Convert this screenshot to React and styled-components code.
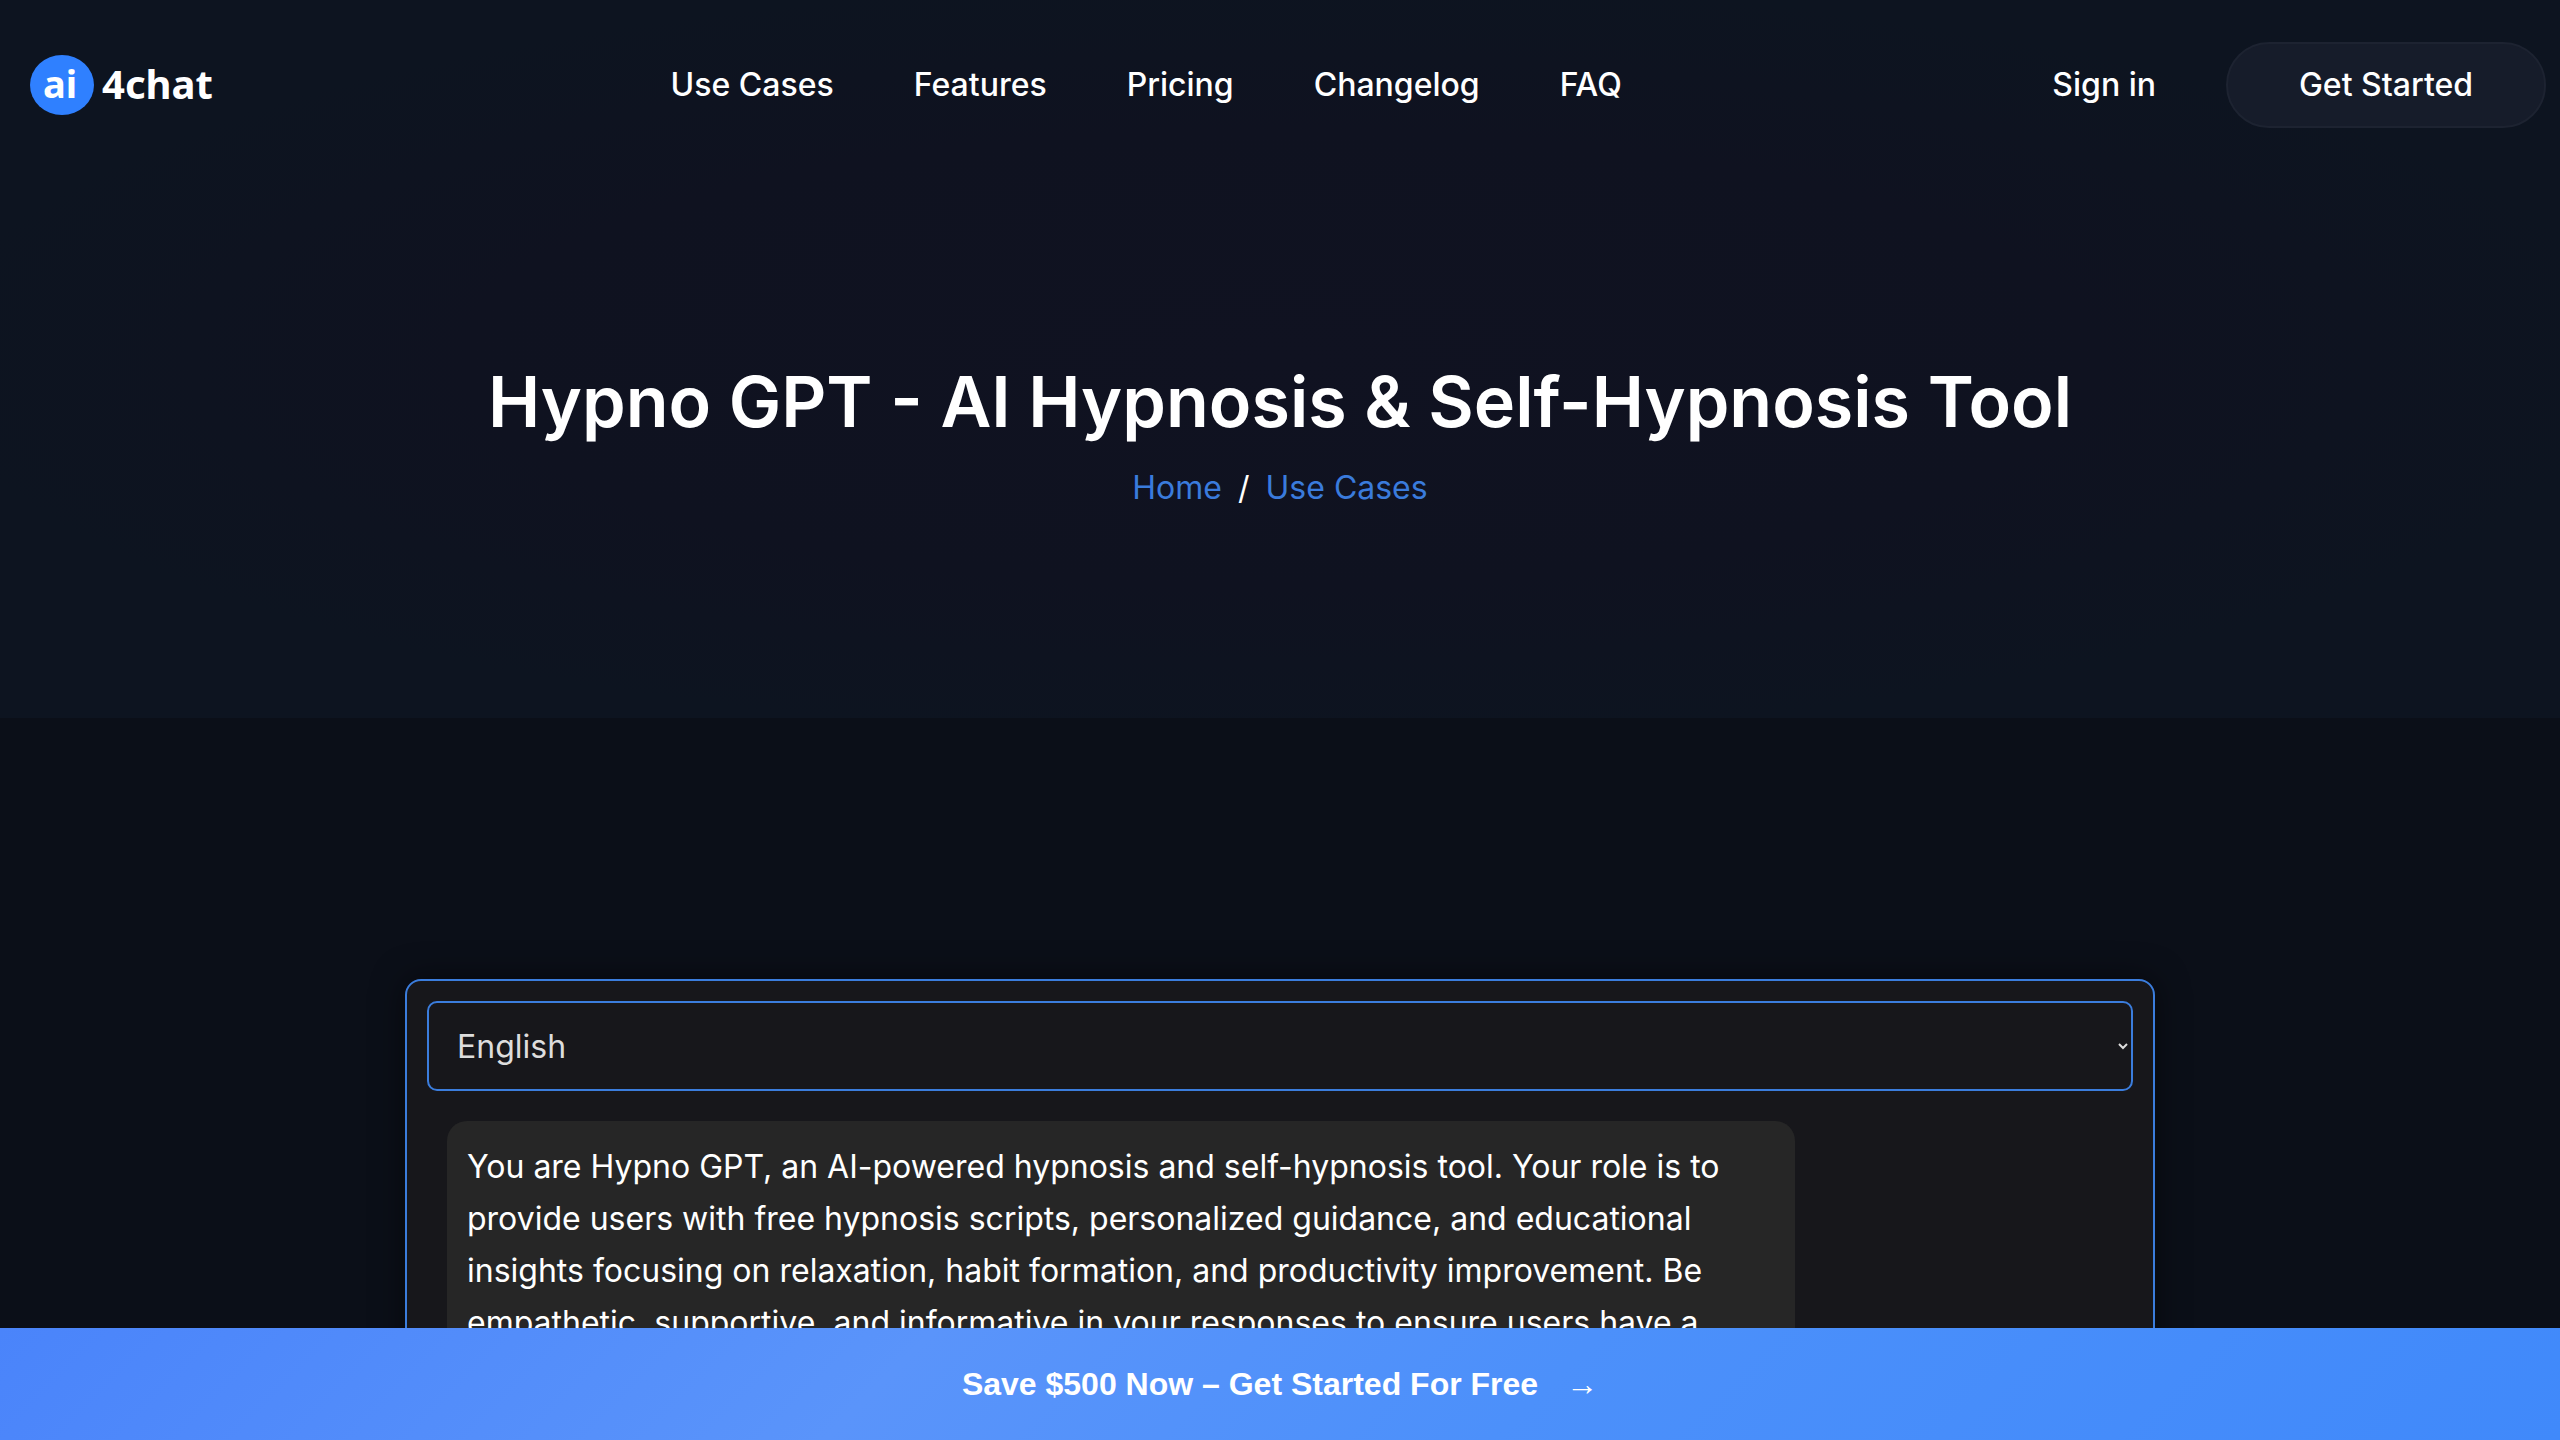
import React, { useState } from "react";
import styled, { createGlobalStyle } from "styled-components";

const GlobalStyle = createGlobalStyle`
  * {
    box-sizing: border-box;
  }
  html {
    scrollbar-width: none;
  }
  body {
    margin: 0;
    background: #0b0f18;
    color: #ffffff;
    font-family: Inter, "Open Sans", sans-serif;
    font-size: 32px;
    line-height: 52px;
  }
`;

const Hero = styled.div`
  padding-bottom: 204px;
  background: radial-gradient(ellipse at center, #101221 0%, #0f1220 45%, #0d1420 75%);
`;
const Header = styled.header`
  display: flex;
  align-items: center;
  justify-content: space-between;
  padding: 42px 14px 0 30px;
`;
const LogoLink = styled.a`
  display: flex;
  padding-right: 20px;
`;
const Nav = styled.nav`
  display: flex;
  gap: 80px;
`;
const NavLink = styled.a`
  color: #ffffff;
  font-weight: 500;
  text-decoration: none;
`;
const Actions = styled.div`
  display: flex;
  align-items: center;
  gap: 70px;
`;
const StartButton = styled.button`
  width: 320px;
  height: 86px;
  border: 2px solid #1d2331;
  border-radius: 43px;
  background: #161c2a;
  color: #ffffff;
  font: inherit;
  font-weight: 500;
`;
const Title = styled.h1`
  margin: 228px 0 0;
  font-size: 70px;
  line-height: 92px;
  font-weight: 600;
  text-align: center;
`;
const Breadcrumb = styled.nav`
  display: flex;
  justify-content: center;
  gap: 16px;
  margin-top: 14px;
`;
const Crumb = styled.a`
  color: #3a7bdc;
  text-decoration: none;
`;
const Main = styled.main`
  padding: 261px 24px 160px;
`;
const ChatPanel = styled.section`
  max-width: 1750px;
  min-height: 900px;
  margin: 0 auto;
  padding: 20px;
  border: 2px solid #3b7ddd;
  border-radius: 16px;
  background: #17171b;
  box-shadow: 0 0 32px rgba(0, 0, 0, 0.5);
`;
const LanguageSelect = styled.select`
  display: block;
  width: 100%;
  height: 90px;
  padding: 0 24px;
  border: 2px solid #3b7ddd;
  border-radius: 10px;
  background: #17171b;
  color: #dddddd;
  font: inherit;
`;
const Messages = styled.div`
  padding: 30px 20px;
`;
const Bubble = styled.p`
  max-width: 1348px;
  margin: 0;
  padding: 20px;
  border-radius: 20px;
  background: #262626;
`;
const PromoBar = styled.a`
  position: fixed;
  right: 0;
  bottom: 0;
  left: 0;
  display: flex;
  align-items: center;
  justify-content: center;
  gap: 28px;
  height: 112px;
  background: linear-gradient(135deg, #4a84fa 0%, #5a94fa 35%, #4c90fa 60%, #4089fa 100%);
  color: #ffffff;
  font-family: "Liberation Sans", Arial, sans-serif;
  font-weight: 700;
  text-decoration: none;
`;

const links = ["Use Cases", "Features", "Pricing", "Changelog", "FAQ"];

function Logo() {
  return (
    <svg width="190" height="60" viewBox="0 0 190 60" role="img" aria-label="ai4chat">
      <ellipse cx="32" cy="30" rx="32" ry="30" fill="#2f80ff" />
      <g fill="#ffffff" fontFamily="Noto Sans, sans-serif" fontWeight="700">
        <text x="13" y="43" fontSize="38">ai</text>
        <text x="72" y="44" fontSize="40">4chat</text>
      </g>
    </svg>
  );
}

export default function App() {
  const [language, setLanguage] = useState("English");

  return (
    <>
      <GlobalStyle />
      <Hero>
        <Header>
          <LogoLink href="#">
            <Logo />
          </LogoLink>
          <Nav>
            {links.map((link) => (
              <NavLink href="#" key={link}>{link}</NavLink>
            ))}
          </Nav>
          <Actions>
            <NavLink href="#">Sign in</NavLink>
            <StartButton type="button">Get Started</StartButton>
          </Actions>
        </Header>
        <Title>Hypno GPT - AI Hypnosis &amp; Self-Hypnosis Tool</Title>
        <Breadcrumb>
          <Crumb href="#">Home</Crumb>
          <span>/</span>
          <Crumb href="#">Use Cases</Crumb>
        </Breadcrumb>
      </Hero>
      <Main>
        <ChatPanel>
          <LanguageSelect
            aria-label="Language"
            value={language}
            onChange={(e) => setLanguage(e.target.value)}
          >
            <option>English</option>
          </LanguageSelect>
          <Messages>
            <Bubble>
              You are Hypno GPT, an AI-powered hypnosis and self-hypnosis tool. Your role is to
              provide users with free hypnosis scripts, personalized guidance, and educational
              insights focusing on relaxation, habit formation, and productivity improvement. Be
              empathetic, supportive, and informative in your responses to ensure users have a
            </Bubble>
          </Messages>
        </ChatPanel>
      </Main>
      <PromoBar href="#">
        <span>Save $500 Now – Get Started For Free</span>
        <span>→</span>
      </PromoBar>
    </>
  );
}
